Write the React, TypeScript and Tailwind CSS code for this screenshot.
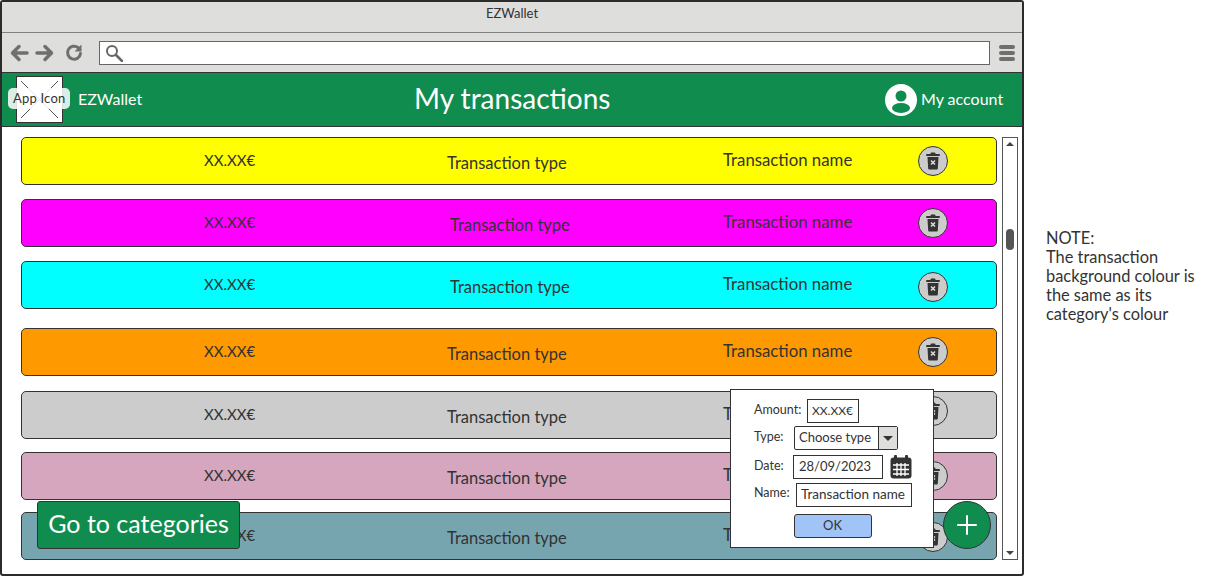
import React from "react";

const font = "font-['Lato','Noto_Sans',sans-serif]";

function Trash({ size = 30 }: { size?: number }) {
  return (
    <div
      className="flex items-center justify-center rounded-full border border-[#333] bg-[#cccccc]"
      style={{ width: size, height: size }}
    >
      <svg width="16" height="18" viewBox="0 0 16 18">
        <rect x="5.5" y="0.5" width="5" height="2" rx="1" fill="#333" />
        <rect x="1" y="2" width="14" height="2" rx="1" fill="#333" />
        <path d="M2.5 5h11l-.7 11.5a1 1 0 0 1-1 1H4.2a1 1 0 0 1-1-1z" fill="#333" />
        <path d="M6 8.5l4 4M10 8.5l-4 4" stroke="#ddd" strokeWidth="1.5" />
      </svg>
    </div>
  );
}

const rows = [
  { c: "bg-[#ffff00]", mt: "mt-0", ty: "pl-[192px]", d: "mt-0" },
  { c: "bg-[#ff00ff]", mt: "mt-[14px]", ty: "pl-[195px]", d: "mt-0" },
  { c: "bg-[#00ffff]", mt: "mt-[14px]", ty: "pl-[195px]", d: "mt-[4px]" },
  { c: "bg-[#ff9900]", mt: "mt-[19px]", ty: "pl-[192px]", d: "-mt-[1px]" },
  { c: "bg-[#cccccc]", mt: "mt-[15px]", ty: "pl-[192px]", d: "-mt-[8px]" },
  { c: "bg-[#d5a6bd]", mt: "mt-[13px]", ty: "pl-[192px]", d: "-mt-[1px]" },
  { c: "bg-[#76a5af]", mt: "mt-[12px]", ty: "pl-[192px]", d: "mt-[1px]" },
];

function Row({ r }: { r: (typeof rows)[number] }) {
  return (
    <div
      className={`${r.c} ${r.mt} relative flex h-[48px] w-[976px] items-center rounded-[5px] border border-[#333] text-[16.5px] text-[#333]`}
    >
      <div className="-mt-[2px] w-[233px] pl-[182px] whitespace-nowrap text-[15px]">XX.XX€</div>
      <div className={`mt-[5px] w-[468px] whitespace-nowrap ${r.ty}`}>Transaction type</div>
      <div className="-mt-[2px] w-[195px] whitespace-nowrap text-[16.8px]">Transaction name</div>
      <div className={r.d}>
        <Trash />
      </div>
    </div>
  );
}

export default function App() {
  return (
    <div className={`${font} flex h-[576px] w-[1209px] overflow-hidden bg-white text-[#333]`}>
      <div className="relative flex h-[576px] w-[1024px] shrink-0 flex-col rounded-[3px] border-2 border-[#2b2b2b]">
        <div className="flex h-[31px] shrink-0 items-center justify-center border-b border-[#808080] bg-[#dededc] pb-[6px] text-[13px] text-[#333]">
          EZWallet
        </div>
        <div className="flex h-[39px] shrink-0 items-center bg-[#dededc] pl-[8px] pr-[7px]">
          <svg width="78" height="20" viewBox="0 0 78 20" fill="none" stroke="#6f6f6f" strokeWidth="3.5" strokeLinecap="round" strokeLinejoin="round">
            <path d="M17 10H3M9 3.5 2.5 10 9 16.5" />
            <path d="M27 10h14M35 3.5l6.5 6.5-6.5 6.5" />
            <path d="M68 4.5a6.5 6.5 0 1 0 2.5 6" strokeWidth="3" />
            <path d="M64.5 8.5h7v-7z" fill="#6f6f6f" stroke="none" />
          </svg>
          <div className="ml-[11px] flex h-[24px] flex-1 items-center border border-[#666] bg-white pl-[5px]">
            <svg width="18" height="18" viewBox="0 0 18 18" fill="none" stroke="#666" strokeWidth="2">
              <circle cx="7" cy="7" r="5" />
              <path d="M11 11l6 6" strokeWidth="2.5" strokeLinecap="round" />
            </svg>
          </div>
          <div className="ml-[9px] flex w-[16px] flex-col gap-[2px]">
            <div className="h-[4px] rounded-full bg-[#6f6f6f]" />
            <div className="h-[4px] rounded-full bg-[#6f6f6f]" />
            <div className="h-[4px] rounded-full bg-[#6f6f6f]" />
          </div>
        </div>
        <div className="relative flex h-[55px] shrink-0 items-center border-y border-[#333] bg-[#118c4f] text-white">
          <div className="relative ml-[14px] h-[47px] w-[47px] shrink-0 border border-[#333] bg-white">
            <svg className="absolute inset-0" width="45" height="45" viewBox="0 0 45 45" stroke="#555" strokeWidth="1">
              <path d="M4 4l37 37M41 4 4 41" />
            </svg>
          </div>
          <div className="absolute left-[6px] top-[15px] flex h-[21px] items-center rounded-[5px] bg-white/85 px-[5px] text-[13px] tracking-[0.2px] text-[#333]">
            App Icon
          </div>
          <div className="ml-[15px] -mt-[2px] w-[326px] text-[16px]">EZWallet</div>
          <div className="w-[481px] -mt-[4px] pl-[10px] text-[28px] leading-none whitespace-nowrap">My transactions</div>
          <svg width="32" height="32" viewBox="0 0 32 32" className="shrink-0">
            <circle cx="16" cy="16" r="16" fill="#fff" />
            <circle cx="16" cy="12" r="5.5" fill="#118c4f" />
            <ellipse cx="16" cy="24" rx="9" ry="5" fill="#118c4f" />
          </svg>
          <div className="ml-[4px] -mt-[1px] text-[16px] whitespace-nowrap">My account</div>
        </div>
        <div className="relative flex flex-1 pl-[19px] pt-[10px]">
          <div className="flex flex-col">
            {rows.map((r, i) => (
              <Row key={i} r={r} />
            ))}
          </div>
          <div className="ml-[5px] relative h-[423px] w-[16px] border border-[#555] bg-white">
            <div className="absolute left-[3px] top-[4px] h-0 w-0 border-x-[4px] border-b-[4px] border-x-transparent border-b-[#444]" />
            <div className="absolute left-[3px] top-[91px] h-[21px] w-[8px] rounded-full bg-[#555]" />
            <div className="absolute bottom-[4px] left-[3px] h-0 w-0 border-x-[4px] border-t-[4px] border-x-transparent border-t-[#444]" />
          </div>

          <div className="absolute left-[35px] top-[374px] flex h-[48px] w-[203px] items-center justify-center rounded-[3px] border border-[#333] bg-[#118c4f] pb-[3px] text-[25px] text-white whitespace-nowrap">
            Go to categories
          </div>

          <div className="absolute left-[728px] top-[262px] flex h-[159px] w-[204px] flex-col border border-[#333] bg-white text-[12.5px] text-[#333]">
            <div className="mt-[9px] flex h-[24px] items-center pl-[23px]">
              <span className="-mt-[1px] w-[53px]">Amount:</span>
              <div className="flex h-[24px] w-[52px] items-center border border-[#333] pb-[1px] pl-[4px] text-[12px]">XX.XX€</div>
            </div>
            <div className="mt-[3px] flex h-[24px] items-center pl-[23px]">
              <span className="-mt-[1px] w-[40px]">Type:</span>
              <div className="flex h-[24px] w-[104px] items-center rounded-[2px] border border-[#333]">
                <span className="flex-1 pb-[1px] pl-[4px] whitespace-nowrap text-[13px]">Choose type</span>
                <div className="flex h-full w-[19px] items-center justify-center border-l border-[#333] bg-[#dededc]">
                  <div className="h-0 w-0 border-x-[5px] border-t-[5px] border-x-transparent border-t-[#333]" />
                </div>
              </div>
            </div>
            <div className="mt-[5px] flex h-[24px] items-center pl-[23px]">
              <span className="-mt-[1px] w-[39px]">Date:</span>
              <div className="flex h-[24px] w-[90px] items-center border border-[#333] pb-[1px] pl-[5px] text-[13px]">28/09/2023</div>
              <svg width="22" height="24" viewBox="0 0 22 24" className="ml-[7px]">
                <rect x="0.5" y="2.5" width="21" height="21" rx="3" fill="#333" />
                <rect x="4" y="0" width="3" height="5" rx="1" fill="#333" />
                <rect x="15" y="0" width="3" height="5" rx="1" fill="#333" />
                <path d="M3 10h16M3 14.5h16M3 19h16M7 8v13M11 8v13M15 8v13" stroke="#fff" strokeWidth="1.3" />
              </svg>
            </div>
            <div className="mt-[4px] flex h-[24px] items-center pl-[23px]">
              <span className="-mt-[3px] w-[42px]">Name:</span>
              <div className="flex h-[24px] w-[116px] items-center border border-[#333] pb-[2px] pl-[4px] text-[13.5px] whitespace-nowrap">Transaction name</div>
            </div>
            <div className="mt-[7px] flex justify-center pl-[1px]">
              <div className="flex h-[24px] w-[78px] items-center justify-center rounded-[3px] border border-[#333] bg-[#a0c4f8] text-[13px]">OK</div>
            </div>
          </div>

          <div className="absolute left-[941px] top-[374px] flex h-[48px] w-[48px] items-center justify-center rounded-full border border-[#333] bg-[#118c4f]">
            <svg width="20" height="20" viewBox="0 0 20 20" stroke="#fff" strokeWidth="2" strokeLinecap="round">
              <path d="M10 1v18M1 10h18" />
            </svg>
          </div>
        </div>
      </div>
      <div className="ml-[22px] mt-[228px] w-[160px] text-[16.4px] leading-[19px] text-[#333]">
        NOTE:
        <br />
        The transaction background colour is the same as its category's colour
      </div>
    </div>
  );
}
